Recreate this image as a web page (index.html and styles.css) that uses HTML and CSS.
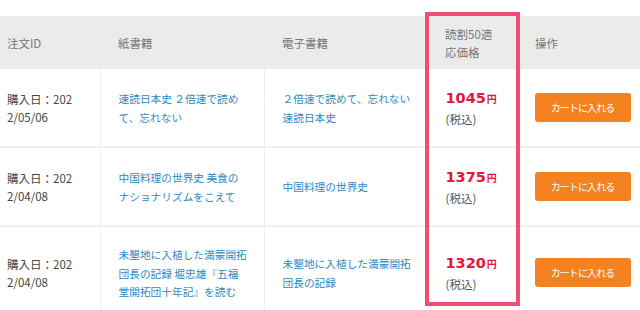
FILE: index.html
```html
<!DOCTYPE html>
<html lang="ja">
<head>
<meta charset="utf-8">
<link rel="stylesheet" href="styles.css">
</head>
<body>
<div class="wrap">
  <table class="orders">
    <colgroup>
      <col class="c-id"><col class="c-paper"><col class="c-ebook"><col class="c-price"><col class="c-op">
    </colgroup>
    <thead>
      <tr>
        <th class="first">注文ID</th>
        <th>紙書籍</th>
        <th>電子書籍</th>
        <th>読割50適<br>応価格</th>
        <th>操作</th>
      </tr>
    </thead>
    <tbody>
      <tr>
        <td class="first">購入日：202<br>2/05/06</td>
        <td><a class="book" href="#">速読日本史&nbsp;２倍速で読め<br>て、忘れない</a></td>
        <td><a class="book" href="#">２倍速で読めて、忘れない<br>速読日本史</a></td>
        <td><div class="price"><b>1045</b><span class="yen">円</span></div><div class="tax">(税込)</div></td>
        <td><button class="cart">カートに入れる</button></td>
      </tr>
      <tr>
        <td class="first">購入日：202<br>2/04/08</td>
        <td><a class="book" href="#">中国料理の世界史 美食の<br>ナショナリズムをこえて</a></td>
        <td><a class="book" href="#">中国料理の世界史</a></td>
        <td><div class="price"><b>1375</b><span class="yen">円</span></div><div class="tax">(税込)</div></td>
        <td><button class="cart">カートに入れる</button></td>
      </tr>
      <tr>
        <td class="first">購入日：202<br>2/04/08</td>
        <td><a class="book" href="#">未墾地に入植した満蒙開拓<br>団長の記録 堀忠雄『五福<br>堂開拓団十年記』を読む</a></td>
        <td><a class="book" href="#">未墾地に入植した満蒙開拓<br>団長の記録</a></td>
        <td><div class="price"><b>1320</b><span class="yen">円</span></div><div class="tax">(税込)</div></td>
        <td><button class="cart">カートに入れる</button></td>
      </tr>
    </tbody>
  </table>
  <div class="highlight"></div>
</div>
</body>
</html>
```
FILE: styles.css
```css
html, body {
  margin: 0;
  padding: 0;
  background: #fff;
}
body {
  font-family: "Noto Sans CJK JP", "Noto Sans", sans-serif;
  font-size: 11.5px;
  color: #444;
  overflow: hidden;
}
.wrap {
  position: relative;
  width: 640px;
  height: 310px;
  padding-top: 16px;
  box-sizing: border-box;
}
.orders {
  width: 640px;
  border-collapse: collapse;
  table-layout: fixed;
}
.c-id { width: 100px; }
.c-paper { width: 164px; }
.c-ebook { width: 163px; }
.c-price { width: 92px; }
.c-op { width: 121px; }

.orders th {
  background: #ebebeb;
  color: #777;
  font-weight: normal;
  text-align: left;
  height: 53px;
  padding: 0 0 0 18px;
  line-height: 18px;
  vertical-align: middle;
  box-sizing: border-box;
}
.orders td {
  padding: 18px 0 18px 18px;
  line-height: 18px;
  vertical-align: middle;
  border-bottom: 2px solid #f0f0f0;
  border-right: 1px solid #eeeeee;
}
.orders td:last-child { border-right: none; padding-left: 15px; }
.orders th:last-child { padding-left: 16px; }
.orders .first { padding-left: 7px; }
.orders tbody tr:first-child td { height: 40px; }

.book {
  color: #3189c2;
  font-size: 10.7px;
  line-height: 17.5px;
  text-decoration: none;
}
.price {
  color: #e4143c;
  line-height: 22px;
  white-space: nowrap;
}
.price b {
  font-family: "DejaVu Sans", sans-serif;
  font-weight: bold;
  font-size: 14.5px;
}
.yen {
  font-weight: bold;
  font-size: 10px;
  margin-left: 1px;
}
.tax {
  color: #555;
  font-size: 11.5px;
  line-height: 18px;
}
.cart {
  display: block;
  width: 96px;
  height: 29px;
  border: none;
  border-radius: 3px;
  background: #f58220;
  color: #fff;
  font-family: "Noto Sans CJK JP", sans-serif;
  font-size: 10px;
  padding: 0;
  letter-spacing: -0.9px;
}
.highlight {
  position: absolute;
  left: 425px;
  top: 12px;
  width: 95px;
  height: 294px;
  border: 4px solid #ee4e76;
  box-sizing: border-box;
  pointer-events: none;
}
```
